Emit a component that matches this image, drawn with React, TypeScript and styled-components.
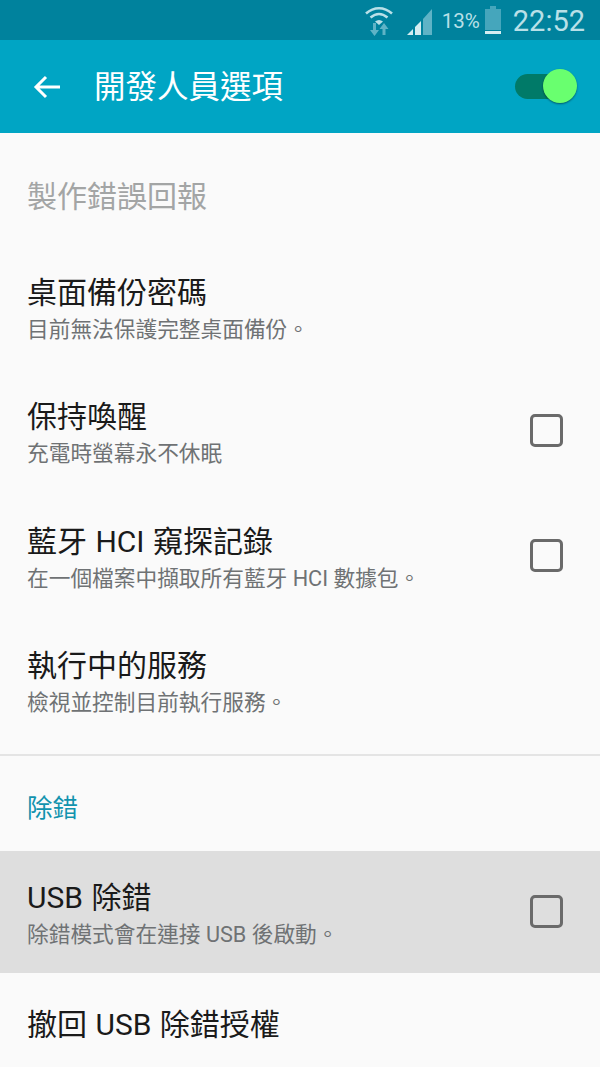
import React from "react";
import styled, { createGlobalStyle } from "styled-components";

const GlobalStyle = createGlobalStyle`
  html, body {
    margin: 0;
    padding: 0;
    background: #fafafa;
  }
  body {
    font-family: Roboto, "Noto Sans CJK TC", sans-serif;
  }
`;

const Page = styled.div`
  width: 600px;
  height: 1067px;
  overflow: hidden;
  background: #fafafa;
`;

const StatusBar = styled.div`
  height: 40px;
  background: #00829d;
  display: flex;
  align-items: center;
  padding-right: 15px;
  justify-content: flex-end;
  color: #b9e0e8;
`;

const WifiIcon = styled.svg`
  width: 30px;
  height: 32px;
  margin-right: 12px;
`;

const SignalIcon = styled.svg`
  width: 27px;
  height: 28px;
  margin-right: 9px;
  margin-top: 3px;
`;

const Percent = styled.span`
  font-size: 20.5px;
  line-height: 40px;
  width: 37px;
  margin-top: 1px;
`;

const BatteryIcon = styled.svg`
  width: 18px;
  height: 28px;
  margin-left: 5px;
  margin-right: 11px;
`;

const Clock = styled.span`
  font-size: 29px;
  line-height: 40px;
  margin-top: 2px;
`;

const Toolbar = styled.div`
  height: 93px;
  background: #00a5c4;
  display: flex;
  align-items: center;
  padding: 0 30px 0 32px;
`;

const BackIcon = styled.svg`
  width: 30px;
  height: 30px;
  margin-right: 32px;
`;

const ToolbarTitle = styled.div`
  flex: 1;
  color: #fff;
  font-size: 31.5px;
  line-height: 40px;
  margin-top: 2px;
`;

const Switch = styled.div`
  position: relative;
  width: 55px;
  height: 25px;
  margin-top: -1px;
  border-radius: 13px;
  background: #007a68;
`;

const SwitchThumb = styled.div`
  position: absolute;
  right: -7px;
  top: -5px;
  width: 34px;
  height: 34px;
  border-radius: 50%;
  background: #69ff6f;
  box-shadow: 0 1px 2px rgba(0, 0, 0, 0.45);
`;

const Row = styled.div<{ $height: number; $top: number; $active?: boolean }>`
  box-sizing: border-box;
  height: ${({ $height }) => $height}px;
  padding: ${({ $top }) => $top}px 37px 0 27px;
  background: ${({ $active }) => ($active ? "#dedede" : "transparent")};
  display: flex;
  justify-content: space-between;
`;

const RowText = styled.div`
  display: flex;
  flex-direction: column;
`;

const Title = styled.div<{ $disabled?: boolean }>`
  font-size: 30px;
  line-height: 40px;
  word-spacing: 1px;
  margin-top: 1px;
  color: ${({ $disabled }) => ($disabled ? "#a3a5a5" : "#1a1a1a")};
`;

const Subtitle = styled.div`
  font-size: 21.7px;
  line-height: 34px;
  color: #6f7274;
`;

const Checkbox = styled.div`
  box-sizing: border-box;
  width: 33px;
  height: 33px;
  margin-top: 18px;
  border: 3px solid #6a6a6a;
  border-radius: 5px;
`;

const Divider = styled.div`
  height: 2px;
  margin-top: 11px;
  background: #e4e4e4;
`;

const SectionHeader = styled.div`
  box-sizing: border-box;
  height: 95px;
  padding: 34px 27px 0;
  font-size: 25.5px;
  line-height: 36px;
  color: #1293ae;
`;

type Item = {
  title: string;
  subtitle?: string;
  checkbox?: boolean;
  active?: boolean;
  height: number;
  top: number;
};

const firstItems: Item[] = [
  { title: "桌面備份密碼", subtitle: "目前無法保護完整桌面備份。", height: 124, top: 26 },
  { title: "保持喚醒", subtitle: "充電時螢幕永不休眠", checkbox: true, height: 125, top: 26 },
  { title: "藍牙 HCI 窺探記錄", subtitle: "在一個檔案中擷取所有藍牙 HCI 數據包。", checkbox: true, height: 124, top: 26 },
  { title: "執行中的服務", subtitle: "檢視並控制目前執行服務。", height: 124, top: 26 },
];

const SettingRow = ({ item }: { item: Item }) => (
  <Row $height={item.height} $top={item.top} $active={item.active}>
    <RowText>
      <Title>{item.title}</Title>
      {item.subtitle && <Subtitle>{item.subtitle}</Subtitle>}
    </RowText>
    {item.checkbox && <Checkbox />}
  </Row>
);

const App = () => {
  return (
    <Page>
      <GlobalStyle />
      <StatusBar>
        <WifiIcon viewBox="0 0 30 32">
          <path d="M2 9.500C10 2.500 20 2.500 28 9.500" fill="none" stroke="#b9e0e8" strokeWidth="2.6" />
          <path d="M6.500 13.500C12 9 18 9 23.500 13.500" fill="none" stroke="#b9e0e8" strokeWidth="2.6" />
          <path d="M11 17.500C13.500 15.500 16.500 15.500 19 17.500L15 21Z" fill="#b9e0e8" />
          <path d="M9 19v7H6l4.500 6 4.500-6h-3v-7z" fill="#5fb3c6" />
          <path d="M20 19l-4.500 6h3v6h3v-6h3z" fill="#5fb3c6" />
        </WifiIcon>
        <SignalIcon viewBox="0 0 27 28">
          <path d="M1 27l6-6v6z" fill="#d5edf1" />
          <path d="M9 19l6-6v14H9z" fill="#d5edf1" />
          <path d="M17 11L26 1v26h-9z" fill="#5fb3c6" />
        </SignalIcon>
        <Percent>13%</Percent>
        <BatteryIcon viewBox="0 0 18 28">
          <path d="M6 0h6v3h5v21H1V3h5z" fill="#45a6bc" />
          <rect x="1" y="25" width="16" height="3" fill="#d5edf1" />
        </BatteryIcon>
        <Clock>22:52</Clock>
      </StatusBar>
      <Toolbar>
        <BackIcon viewBox="0 0 30 30">
          <path d="M28 15H4M14 5L4 15l10 10" fill="none" stroke="#fff" strokeWidth="3" />
        </BackIcon>
        <ToolbarTitle>開發人員選項</ToolbarTitle>
        <Switch>
          <SwitchThumb />
        </Switch>
      </Toolbar>
      <Row $height={113} $top={43}>
        <Title $disabled>製作錯誤回報</Title>
      </Row>
      {firstItems.map((item) => (
        <SettingRow key={item.title} item={item} />
      ))}
      <Divider />
      <SectionHeader>除錯</SectionHeader>
      <SettingRow item={{ title: "USB 除錯", subtitle: "除錯模式會在連接 USB 後啟動。", checkbox: true, active: true, height: 122, top: 26 }} />
      <SettingRow item={{ title: "撤回 USB 除錯授權", height: 94, top: 31 }} />
    </Page>
  );
};

export default App;
